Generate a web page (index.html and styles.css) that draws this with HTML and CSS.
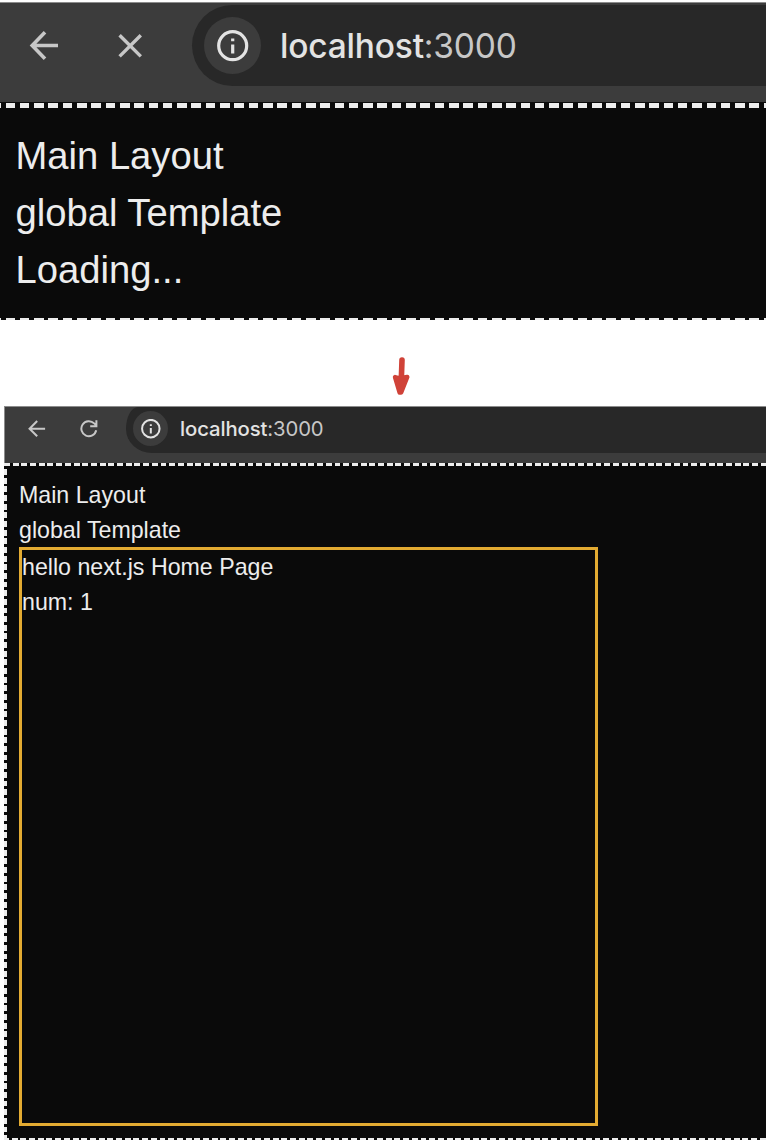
FILE: index.html
```
<!DOCTYPE html>
<html lang="en">
<head>
<meta charset="utf-8">
<title>localhost:3000</title>
<link rel="stylesheet" href="styles.css">
</head>
<body>
<section class="shot shot-loading">
  <header class="toolbar">
    <svg class="back" viewBox="0 0 30 30" fill="none" stroke="#c7c7c7" stroke-width="3.6"><path d="M29 15.5H4M16 2.3 3.2 15.5 16 28.7"/></svg>
    <svg class="reload" viewBox="0 0 24 24" fill="none" stroke="#c7c7c7" stroke-width="3.4"><path d="M1.6 1.2l21.2 21.2M22.8 1.2 1.6 22.4"/></svg>
    <div class="address">
      <span class="info"><svg viewBox="0 0 32 32" fill="none" stroke="#e3e3e3" stroke-width="3.2"><circle cx="15.7" cy="15.7" r="14"/><path d="M15.7 14.4v9M15.7 8.4v2.8"/></svg></span>
      <span class="url">localhost<span class="port">:3000</span></span>
    </div>
  </header>
  <main class="viewport">
    <p>Main Layout</p>
    <p>global Template</p>
    <p>Loading...</p>
  </main>
</section>
<div class="step">
  <svg viewBox="0 0 18 40" fill="#d04238" stroke="#d04238" stroke-linecap="round" stroke-linejoin="round"><path d="M10 4 9.3 24" stroke-width="5.6"/><path d="M3 21 6.5 22 12 21.5 15.3 21 9.2 36.5 7.6 36.5Z" stroke-width="4.4"/></svg>
</div>
<section class="shot shot-ready">
  <header class="toolbar">
    <svg class="back" viewBox="0 0 30 30" fill="none" stroke="#c7c7c7" stroke-width="3.4"><path d="M28.5 14.5H3M15.3 1.8 2.6 14.5l12.7 12.7"/></svg>
    <svg class="reload" viewBox="0 0 18 18" fill="none" stroke="#c7c7c7" stroke-width="2"><path d="M16.2 10.2A7.5 7.5 0 1 1 14.2 3.4L16.2 5.4M16.4 .2V6.3H10.2"/></svg>
    <div class="address">
      <span class="info"><svg viewBox="0 0 32 32" fill="none" stroke="#e3e3e3" stroke-width="3.2"><circle cx="15.7" cy="15.4" r="14"/><path d="M15.7 14.2v9M15.7 8.2v2.8"/></svg></span>
      <span class="url">localhost<span class="port">:3000</span></span>
    </div>
  </header>
  <main class="viewport">
    <p>Main Layout</p>
    <p>global Template</p>
    <div class="home">
      <p>hello next.js Home Page</p>
      <p>num: 1</p>
    </div>
  </main>
</section>
</body>
</html>
```
FILE: styles.css
```
* { box-sizing: border-box; }
body { margin: 0; padding-top: 2px; height: 1140px; overflow: hidden; background: #fff; }
p { margin: 0; white-space: nowrap; }
svg { display: block; flex: none; }

.toolbar { display: flex; background: #3c3c3c; border-top: 1px solid #8c8c8c; }
.address { flex: 1; display: flex; align-items: center; background: #282828; }
.info { flex: none; display: grid; place-items: center; border-radius: 50%; background: #3c3c3c; }
.url { font-family: Inter, sans-serif; font-weight: 500; color: #e3e3e3; white-space: nowrap; }
.port { font-weight: 400; color: #c7c7c7; }
.viewport { background-color: #0a0a0a; color: #ededed; font-family: "Liberation Sans", Arial, sans-serif; background-repeat: no-repeat; }

.shot-loading .toolbar { height: 100px; padding: 2px 0 15px 29px; }
.shot-loading .back { width: 30px; height: 30px; margin-top: 25px; }
.shot-loading .reload { width: 24px; height: 24px; margin: 29px 0 0 59px; }
.shot-loading .address { height: 81px; margin-left: 50px; padding-left: 12px; border-radius: 41px 0 0 41px; }
.shot-loading .info { width: 57px; height: 57px; }
.shot-loading .info svg { width: 32px; height: 32px; }
.shot-loading .url { margin-left: 19px; font-size: 33.5px; letter-spacing: -0.2px; }
.shot-loading .viewport {
  height: 218px;
  padding: 24.5px 15.5px;
  font-size: 38.2px;
  line-height: 57.3px;
  background-image:
    repeating-linear-gradient(90deg, #ededed 0 9.6px, #0a0a0a 9.6px 14.306px),
    repeating-linear-gradient(90deg, #ededed 0 9.6px, #0a0a0a 9.6px 14.306px);
  background-size: 776px 5px, 776px 2px;
  background-position: -8.8px 1px, -8.8px 216px;
}

.step { height: 86px; display: flex; justify-content: center; padding: 36px 0 0 36px; }
.step svg { width: 18px; height: 40px; }

.shot-ready { margin-left: 4px; }
.shot-ready .toolbar { height: 57px; padding-left: 23px; border-left: 1px solid #8c8c8c; }
.shot-ready .back { width: 18px; height: 18px; margin-top: 13px; }
.shot-ready .reload { width: 18px; height: 18px; margin: 13px 0 0 34px; }
.shot-ready .address { height: 46px; margin-left: 28px; padding: 0 0 3px 7px; border-radius: 12px 0 0 26px / 22px 0 0 24px; }
.shot-ready .info { width: 35px; height: 35px; }
.shot-ready .info svg { width: 20px; height: 20px; }
.shot-ready .url { margin: 0 0 1px 12px; font-size: 20.3px; letter-spacing: -0.1px; }
.shot-ready .viewport {
  height: 677px;
  padding: 15px 15px 0;
  font-size: 23.2px;
  line-height: 35px;
  background-image:
    repeating-linear-gradient(90deg, #ededed 0 5.9px, #0a0a0a 5.9px 8.7px),
    repeating-linear-gradient(90deg, #ededed 0 5.9px, #0a0a0a 5.9px 8.7px),
    repeating-linear-gradient(180deg, #ededed 0 5.9px, #0a0a0a 5.9px 8.65px);
  background-size: 776px 3px, 776px 2px, 3px 682px;
  background-position: 0 0, -1px 675px, 0 -2.5px;
}
.home { width: 579px; height: 579px; margin-top: -1px; border: 3px solid #e3ab32; }
```
